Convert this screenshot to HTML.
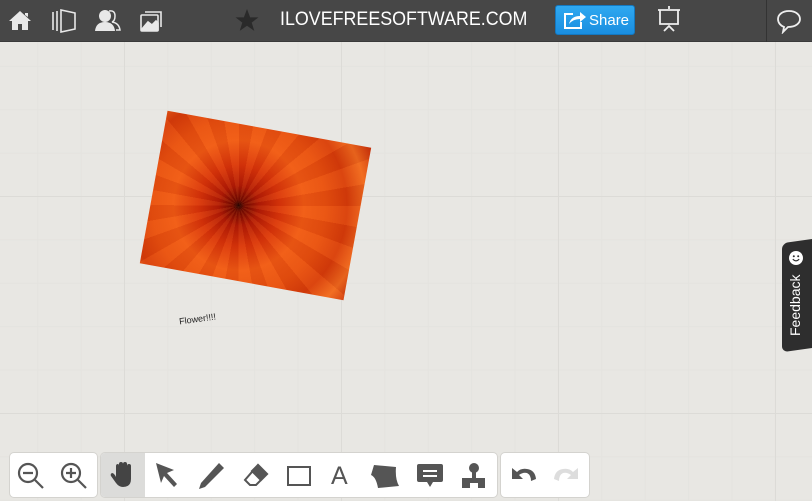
<!DOCTYPE html>
<html><head><meta charset="utf-8"><style>
*{margin:0;padding:0;box-sizing:border-box}
body{width:812px;height:501px;overflow:hidden;position:relative;font-family:"Liberation Sans",sans-serif;
background-color:#e8e7e3;
background-image:linear-gradient(to right,#dcdbd7 1px,transparent 1px),linear-gradient(to bottom,#dcdbd7 1px,transparent 1px),linear-gradient(to right,#e4e3df 1px,transparent 1px),linear-gradient(to bottom,#e4e3df 1px,transparent 1px);
background-size:217px 217px,217px 217px,43.4px 43.4px,43.4px 43.4px;
background-position:124px 196px,124px 196px,124px 196px,124px 196px}
.top{position:absolute;left:0;top:0;width:812px;height:42px;background:#474747;border-bottom:1px solid #3a3a3a}
.top svg{position:absolute}
.title{position:absolute;left:280px;top:9px;color:#fff;font-size:19px;transform:scaleX(0.94);transform-origin:left}
.share{position:absolute;left:555px;top:5px;width:80px;height:30px;background:linear-gradient(#2fa8f0,#1a8ee0);border-radius:3px;border:1px solid #1478c0;color:#fff;font-size:15px;padding:6px 0 0 33px}
.sep{position:absolute;left:766px;top:0;width:1px;height:42px;background:#333}
.img{position:absolute;left:152px;top:128px;width:207px;height:155px;transform:rotate(10.3deg);overflow:hidden;
background:radial-gradient(circle at 42% 52%,#1a0000 0,#6b0800 4%,#b01a05 14%,#d8340a 28%,#f05a14 45%,#e8500f 60%,#d63c0a 75%,#f06a1e 88%,#c8300a 100%)}
.img:after{content:"";position:absolute;inset:0;background:repeating-conic-gradient(from 0deg at 42% 52%,rgba(255,140,60,.12) 0 10deg,rgba(120,10,0,.08) 10deg 20deg)}
.lbl{position:absolute;left:179px;top:314px;font-size:9px;color:#222;transform:rotate(-8deg)}
.fb{position:absolute;left:782px;top:239px;width:30px;height:109px;background:#2e2e2e;border-radius:6px 0 0 6px;transform:skewY(-8deg);transform-origin:right}
.fbt{position:absolute;left:787px;top:336px;transform:rotate(-90deg);transform-origin:left top;color:#fff;font-size:14px}
.grp{position:absolute;top:453px;height:44px;background:#fff;border-radius:4px;box-shadow:0 0 0 1px #d4d3cf}
.grp svg{position:absolute;top:8px}
</style></head><body>
<div class="top">
<svg style="left:8px;top:9px" width="24" height="22" viewBox="0 0 24 22"><path d="M12 2 L1 12 H4 V21 H10 V15 H14 V21 H20 V12 H23 Z M17 4 H20 V8 L17 6Z" fill="#e8e8e8"/></svg>
<svg style="left:51px;top:8px" width="26" height="26" viewBox="0 0 26 26" fill="none" stroke="#e8e8e8" stroke-width="1.6"><path d="M2 4 V22 M6 3 V23 M10 2 V24 L24 21 V5 Z"/></svg>
<svg style="left:95px;top:8px" width="26" height="24" viewBox="0 0 26 24"><circle cx="10" cy="8" r="6" fill="#e8e8e8"/><path d="M0 23 Q1 14 10 14 Q19 14 20 23Z" fill="#e8e8e8"/><path d="M14 3 Q20 2 20 8 Q20 13 17 14 Q24 15 25 22 H21" fill="none" stroke="#e8e8e8" stroke-width="1.5"/></svg>
<svg style="left:139px;top:8px" width="26" height="26" viewBox="0 0 26 26" fill="none" stroke="#e8e8e8" stroke-width="1.6"><rect x="2" y="7" width="17" height="16" rx="1"/><path d="M6 4 H22 V19"/><path d="M3 21 L9 14 L13 17 L17 13 L19 15 V22 H3Z" fill="#e8e8e8"/></svg>
<svg style="left:234px;top:8px" width="26" height="25" viewBox="0 0 24 24"><path d="M12 1 L15 9 H23 L16.5 14 L19 22 L12 17 L5 22 L7.5 14 L1 9 H9Z" fill="#2a2a2a"/></svg>
<div class="title">ILOVEFREESOFTWARE.COM</div>
<div class="share">Share</div>
<svg style="left:563px;top:10px" width="24" height="20" viewBox="0 0 24 20" fill="none" stroke="#fff" stroke-width="2"><path d="M10 4 H2 V18 H18 V12"/><path d="M6 14 Q8 6 17 6 V2 L23 7 L17 12 V9 Q10 9 6 14Z" fill="#fff" stroke="none"/></svg>
<svg style="left:656px;top:5px" width="26" height="30" viewBox="0 0 26 30" fill="none" stroke="#eee" stroke-width="1.8"><path d="M13 1 V4 M2 5 H24 M4 5 V19 H22 V5 M8 26 L13 21 L18 26"/></svg>
<div class="sep"></div>
<svg style="left:776px;top:8px" width="26" height="26" viewBox="0 0 26 26" fill="none" stroke="#eee" stroke-width="1.8"><path d="M13 3 C6 3 2 7 2 11 C2 15 5 18 8 19 L7 24 L12 19 C20 19 24 15 24 11 C24 7 20 3 13 3Z"/></svg>
</div>
<div class="img"></div>
<div class="lbl">Flower!!!!</div>
<div class="fb"></div>
<svg style="position:absolute;left:789px;top:251px" width="14" height="14" viewBox="0 0 14 14"><circle cx="7" cy="7" r="7" fill="#fff"/><circle cx="4.8" cy="5.3" r="1" fill="#2e2e2e"/><circle cx="9.2" cy="5.3" r="1" fill="#2e2e2e"/><path d="M3.8 8.2 Q7 11.5 10.2 8.2" stroke="#2e2e2e" stroke-width="1.2" fill="none"/></svg>
<div class="fbt">Feedback</div>

<div class="grp" style="left:10px;width:87px">
<svg style="left:6px" width="30" height="30" viewBox="0 0 30 30" fill="none" stroke="#555" stroke-width="2.2"><circle cx="12" cy="12" r="9"/><path d="M7 12 H17 M19 19 L27 27"/></svg>
<svg style="left:49px" width="30" height="30" viewBox="0 0 30 30" fill="none" stroke="#555" stroke-width="2.2"><circle cx="12" cy="12" r="9"/><path d="M7 12 H17 M12 7 V17 M19 19 L27 27"/></svg>
</div>
<div class="grp" style="left:101px;width:396px;overflow:hidden">
<div style="position:absolute;left:0;top:0;width:44px;height:44px;background:#dcdcda"></div>
<svg style="left:9px" width="26" height="28" viewBox="0 0 26 28"><path d="M6 16 V5 Q6 3 8 3 Q9 3 9 5 V13 V3 Q9 1 11 1 Q13 1 13 3 V13 V3 Q13 1 15 1 Q17 1 17 3 V13 V5 Q17 3 19 3 Q21 3 21 5 V18 Q21 26 13 26 Q9 26 6 22 L1 15 Q0 13 2 12 Q4 12 6 16Z" fill="#444"/></svg>
<svg style="left:52px" width="28" height="28" viewBox="0 0 28 28"><path d="M3 2 L21 9 L14 12 L24 23 L21 26 L11 15 L8 22Z" fill="#555"/></svg>
<svg style="left:95px" width="30" height="30" viewBox="0 0 30 30"><path d="M23 2 L28 7 L9 26 L3 28 L5 22Z" fill="#555"/></svg>
<svg style="left:140px" width="30" height="30" viewBox="0 0 30 30" fill="none" stroke="#555" stroke-width="2"><path d="M17 4 L26 13 L15 24 H9 L4 19 Z M11 10 L20 19" /><path d="M17 4 L26 13 L20 19 L11 10Z" fill="#555"/></svg>
<svg style="left:184px" width="30" height="30" viewBox="0 0 30 30" fill="none" stroke="#555" stroke-width="2"><rect x="3" y="6" width="22" height="18"/></svg>
<div style="position:absolute;left:230px;top:9px;font-size:25px;color:#555">A</div>
<svg style="left:268px" width="32" height="30" viewBox="0 0 32 30"><path d="M5 4 L27 6 Q26 18 30 25 L9 27 Q7 16 2 14Z" fill="#555"/></svg>
<svg style="left:314px" width="30" height="30" viewBox="0 0 30 30"><path d="M4 3 H26 Q28 3 28 5 V19 Q28 21 26 21 H18 L15 26 L12 21 H4 Q2 21 2 19 V5 Q2 3 4 3Z" fill="#555"/><path d="M8 10 H22 M8 15 H22" stroke="#fff" stroke-width="2"/></svg>
<svg style="left:358px" width="30" height="30" viewBox="0 0 30 30" fill="#555"><circle cx="15" cy="7" r="5"/><path d="M13 11 H17 V17 H26 V27 H19 V22 H11 V27 H3 V17 H13Z"/></svg>
</div>
<div class="grp" style="left:501px;width:88px">
<svg style="left:8px" width="30" height="30" viewBox="0 0 30 30"><path d="M3 7 V18 H14 L10 14 Q14 11 18 12 Q22 14 22 20 L27 18 Q26 9 18 8 Q12 7 8 11Z" fill="#555"/></svg>
<svg style="left:50px" width="30" height="30" viewBox="0 0 30 30"><path d="M27 7 V18 H16 L20 14 Q16 11 12 12 Q8 14 8 20 L3 18 Q4 9 12 8 Q18 7 22 11Z" fill="#ddd"/></svg>
</div>
</body></html>
